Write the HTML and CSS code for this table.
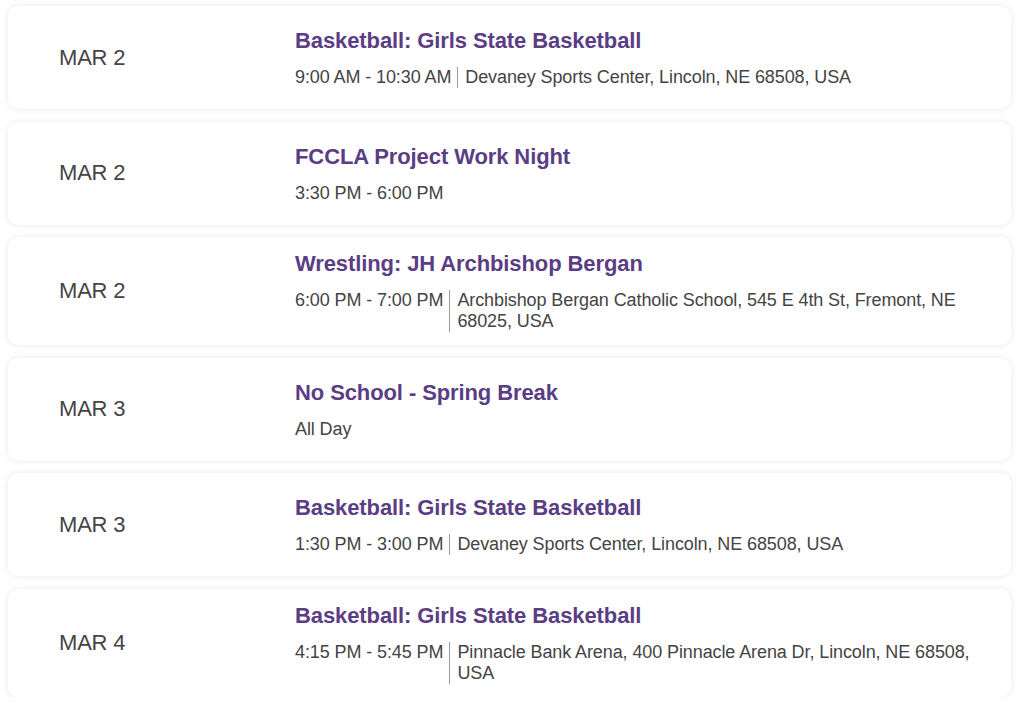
FILE: index.html
```html
<!DOCTYPE html>
<html lang="en">
<head>
<meta charset="utf-8">
<title>Events</title>
<link rel="stylesheet" href="styles.css">
</head>
<body>
<main class="events">
  <article class="event">
    <div class="event-date">MAR 2</div>
    <div class="event-body">
      <h3 class="event-title">Basketball: Girls State Basketball</h3>
      <div class="event-meta">
        <span class="event-time">9:00 AM - 10:30 AM</span>
        <span class="event-loc">Devaney Sports Center, Lincoln, NE 68508, USA</span>
      </div>
    </div>
  </article>
  <article class="event">
    <div class="event-date">MAR 2</div>
    <div class="event-body">
      <h3 class="event-title">FCCLA Project Work Night</h3>
      <div class="event-meta">
        <span class="event-time">3:30 PM - 6:00 PM</span>
      </div>
    </div>
  </article>
  <article class="event">
    <div class="event-date">MAR 2</div>
    <div class="event-body">
      <h3 class="event-title">Wrestling: JH Archbishop Bergan</h3>
      <div class="event-meta">
        <span class="event-time">6:00 PM - 7:00 PM</span>
        <span class="event-loc">Archbishop Bergan Catholic School, 545 E 4th St, Fremont, NE 68025, USA</span>
      </div>
    </div>
  </article>
  <article class="event">
    <div class="event-date">MAR 3</div>
    <div class="event-body">
      <h3 class="event-title">No School - Spring Break</h3>
      <div class="event-meta">
        <span class="event-time">All Day</span>
      </div>
    </div>
  </article>
  <article class="event">
    <div class="event-date">MAR 3</div>
    <div class="event-body">
      <h3 class="event-title">Basketball: Girls State Basketball</h3>
      <div class="event-meta">
        <span class="event-time">1:30 PM - 3:00 PM</span>
        <span class="event-loc">Devaney Sports Center, Lincoln, NE 68508, USA</span>
      </div>
    </div>
  </article>
  <article class="event">
    <div class="event-date">MAR 4</div>
    <div class="event-body">
      <h3 class="event-title">Basketball: Girls State Basketball</h3>
      <div class="event-meta">
        <span class="event-time">4:15 PM - 5:45 PM</span>
        <span class="event-loc">Pinnacle Bank Arena, 400 Pinnacle Arena Dr, Lincoln, NE 68508, USA</span>
      </div>
    </div>
  </article>
</main>
</body>
</html>
```
FILE: styles.css
```css
* { box-sizing: border-box; }
html, body { margin: 0; padding: 0; background: #fff; }
body {
  font-family: "Liberation Sans", Arial, sans-serif;
  color: #444;
}
.events {
  display: flex;
  flex-direction: column;
  gap: 12.6px;
  padding: 6px 13px 0 8px;
}
.event {
  display: grid;
  grid-template-columns: 287px 1fr;
  align-items: center;
  min-height: 103px;
  padding: 13px 30px 13px 0;
  background: #fff;
  border-radius: 10px;
  box-shadow: 0 0 6px rgba(0,0,0,0.09);
}
.event-date {
  padding-left: 51px;
  font-size: 22px;
  letter-spacing: -0.2px;
  color: #444;
}
.event-title {
  margin: 0 0 12px;
  font-size: 22px;
  line-height: 28px;
  font-weight: 700;
  letter-spacing: -0.1px;
  color: #5a3d84;
}
.event-meta {
  display: flex;
  align-items: stretch;
  font-size: 18px;
  line-height: 21px;
  letter-spacing: -0.1px;
  color: #444;
}
.event-time { white-space: nowrap; flex: none; }
.event-loc {
  margin-left: 6px;
  padding-left: 7px;
  border-left: 1px solid #9a9a9a;
}
```
